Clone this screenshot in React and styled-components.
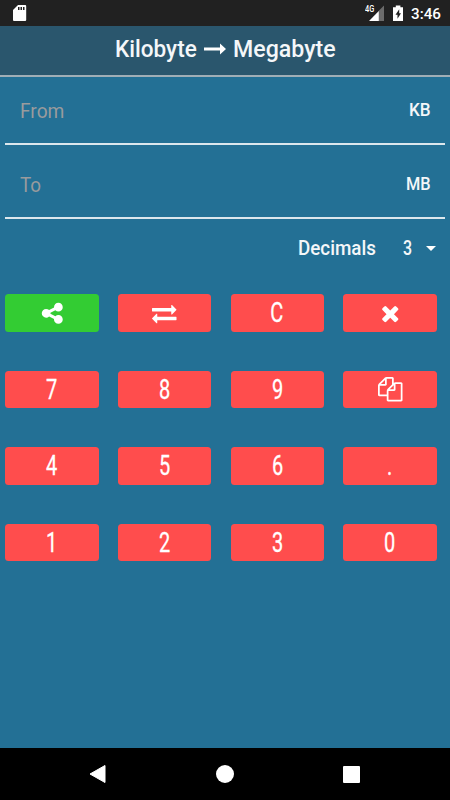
import React from "react";
import styled, { createGlobalStyle } from "styled-components";

const Global = createGlobalStyle`
  * { box-sizing: border-box; }
  body { margin: 0; background: #237095; }
  button { font: inherit; color: inherit; border: 0; padding: 0; margin: 0; }
`;

const Screen = styled.div`
  width: 450px;
  height: 800px;
  display: flex;
  flex-direction: column;
  overflow: hidden;
  background: #237095;
  color: #fff;
  font-family: Roboto, "Liberation Sans", sans-serif;
`;

const StatusBar = styled.div`
  height: 26px;
  flex: none;
  display: flex;
  align-items: center;
  justify-content: space-between;
  padding: 0 9px 0 13px;
  background: #212121;
`;

const StatusGroup = styled.div`
  display: flex;
  align-items: center;
`;

const Clock = styled.span`
  margin-left: 6px;
  padding-top: 2px;
  font-size: 15.2px;
  line-height: 18px;
  font-weight: 500;
`;

const Network = styled.span`
  display: block;
  width: 4px;
  margin-bottom: 8px;
  font-size: 9px;
  line-height: 10px;
  font-weight: 500;
  transform: scaleX(0.82);
  transform-origin: left center;
`;

const Header = styled.header`
  height: 51px;
  flex: none;
  display: flex;
  align-items: center;
  padding: 0 0 2px 115px;
  background: #2a566d;
  border-bottom: 2px solid #a0aeb6;
`;

const Label = styled.span`
  display: block;
  width: ${(p) => p.$width}px;
  font-size: ${(p) => p.$size}px;
  line-height: 1;
  font-weight: ${(p) => p.$weight || 500};
  color: ${(p) => p.$color || "#f4f7f9"};
  white-space: nowrap;
  transform: scaleX(${(p) => p.$stretch || 1});
  transform-origin: left center;
`;

const ArrowIcon = styled.svg`
  margin: 0 7px 2px;
  flex: none;
`;

const Field = styled.div`
  height: ${(p) => p.$height}px;
  flex: none;
  display: flex;
  justify-content: space-between;
  align-items: flex-start;
  margin: 0 5px;
  padding: ${(p) => p.$top}px 15px 0 15px;
  border-bottom: 2px solid #dce7ed;
`;

const DecimalsRow = styled.div`
  height: 75px;
  flex: none;
  display: flex;
  align-items: flex-start;
  justify-content: flex-end;
  padding: 19px 14px 0 0;
`;

const Caret = styled.svg`
  margin: 8px 0 0 15px;
`;

const Gap = styled.div`
  width: 27px;
`;

const Keypad = styled.main`
  flex: 1;
  display: grid;
  grid-template-columns: repeat(4, 93.4px);
  grid-auto-rows: 37.5px;
  column-gap: 19.2px;
  row-gap: 39.1px;
  padding-left: 5.4px;
`;

const Key = styled.button`
  display: flex;
  align-items: center;
  justify-content: center;
  border-radius: 3.5px;
  background: ${(p) => (p.$share ? "#33cc33" : "#ff4d4d")};
`;

const KeyText = styled.span`
  font-size: 27px;
  line-height: 36px;
  padding-top: 1px;
  font-weight: 400;
  transform: scaleX(0.74);
  -webkit-text-stroke: 0.3px #fff;
`;

const IconSvg = styled.svg`
  width: 24.5px;
  height: 24.5px;
  overflow: visible;
  fill: #fff;
`;

const NavBar = styled.nav`
  height: 52px;
  flex: none;
  display: flex;
  align-items: center;
  justify-content: space-around;
  padding: 0 36px 0 35px;
  background: #000;
`;

const icons = {
  share:
    "M1344 1024q133 0 226.500 93.500t93.500 226.500-93.500 226.500-226.500 93.500-226.500-93.500-93.500-226.500q0-12 2-34l-360-180q-92 86-218 86-133 0-226.500-93.500t-93.500-226.500 93.500-226.500 226.500-93.500q126 0 218 86l360-180q-2-22-2-34 0-133 93.500-226.500t226.500-93.500 226.500 93.500 93.500 226.500-93.500 226.500-226.500 93.500q-126 0-218-86l-360 180q2 22 2 34t-2 34l360 180q92-86 218-86z",
  swap:
    "M1792 1184v192q0 13-9.500 22.500t-22.500 9.500h-1376v192q0 13-9.500 22.500t-22.500 9.500q-12 0-24-10l-319-320q-9-9-9-22 0-14 9-23l320-320q9-9 23-9 13 0 22.500 9.500t9.500 22.500v192h1376q13 0 22.500 9.500t9.500 22.500zm0-544q0 14-9 23l-320 320q-9 9-23 9-13 0-22.500-9.500t-9.500-22.500v-192h-1376q-13 0-22.500-9.500t-9.500-22.500v-192q0-13 9.500-22.500t22.500-9.500h1376v-192q0-14 9-23t23-9q12 0 24 10l319 319q9 9 9 23z",
  close:
    "M1490 1322q0 40-28 68l-136 136q-28 28-68 28t-68-28l-294-294-294 294q-28 28-68 28t-68-28l-136-136q-28-28-28-68t28-68l294-294-294-294q-28-28-28-68t28-68l136-136q28-28 68-28t68 28l294 294 294-294q28-28 68-28t68 28l136 136q28 28 28 68t-28 68l-294 294 294 294q28 28 28 68z",
  copy:
    "M1696 384q40 0 68 28t28 68v1216q0 40-28 68t-68 28h-960q-40 0-68-28t-28-68v-288h-544q-40 0-68-28t-28-68v-672q0-40 20-88t48-76l408-408q28-28 76-48t88-20h416q40 0 68 28t28 68v328q68-40 128-40h416zm-544 213l-299 299h299v-299zm-640-384l-299 299h299v-299zm196 647l316-316v-416h-384v416q0 40-28 68t-68 28h-416v640h512v-256q0-40 20-88t48-76zm956 804v-1152h-384v416q0 40-28 68t-68 28h-416v640h896z",
};

const KeyIcon = ({ name }) => (
  <IconSvg viewBox="0 0 1792 1792">
    <path d={icons[name]} />
  </IconSvg>
);

const keys = [
  { icon: "share" }, { icon: "swap" }, { text: "C" }, { icon: "close" },
  { text: "7" }, { text: "8" }, { text: "9" }, { icon: "copy" },
  { text: "4" }, { text: "5" }, { text: "6" }, { text: "." },
  { text: "1" }, { text: "2" }, { text: "3" }, { text: "0" },
];

export default function App() {
  return (
    <Screen>
      <Global />
      <StatusBar>
        <svg width="14" height="18" viewBox="0 0 14 18">
          <path d="M5 1h7.200a1 1 0 0 1 1 1v14a1 1 0 0 1-1 1h-11.200a1 1 0 0 1-1-1V6z" fill="#fff" />
          <path d="M5 3h1.500v3H5zM7.500 3H9v3H7.500zM10 3h1.500v3H10z" fill="#212121" />
        </svg>
        <StatusGroup>
          <Network>4G</Network>
          <svg width="36" height="18" viewBox="0 0 36 18">
            <path d="M15 1.500V17H9.500V7z" fill="#6b6b6b" />
            <path d="M9.800 7V17H0z" fill="#fff" />
            <path d="M26.800 1.500h4.600v1.700h2.600v13.800H24V3.200h2.800z" fill="#fff" />
            <path d="M30.200 5.200l-3.700 5.600h2v4l3.500-5.600h-1.800z" fill="#212121" />
          </svg>
          <Clock>3:46</Clock>
        </StatusGroup>
      </StatusBar>
      <Header>
        <Label $width={82} $size={23.5} $stretch={0.96}>Kilobyte</Label>
        <ArrowIcon width="22" height="12" viewBox="0 0 22 12">
          <path d="M0 4.500h16V.5L22 6l-6 5.500V7.500H0z" fill="#fff" />
        </ArrowIcon>
        <Label $width={103} $size={23.5} $stretch={0.985}>Megabyte</Label>
      </Header>
      <Field $height={68} $top={24}>
        <Label $width={44} $size={20.5} $stretch={0.935} $weight={400} $color="#999b9d">From</Label>
        <Label $width={21} $size={18.8} $stretch={0.91}>KB</Label>
      </Field>
      <Field $height={74} $top={30}>
        <Label $width={22} $size={20.5} $stretch={0.92} $weight={400} $color="#999b9d">To</Label>
        <Label $width={24} $size={18.8} $stretch={0.87}>MB</Label>
      </Field>
      <DecimalsRow>
        <Label $width={78} $size={20} $stretch={0.94}>Decimals</Label>
        <Gap />
        <Label $width={8} $size={20} $stretch={0.8}>3</Label>
        <Caret width="10" height="5" viewBox="0 0 10 5">
          <path d="M0 0h10L5 5z" fill="#fff" />
        </Caret>
      </DecimalsRow>
      <Keypad>
        {keys.map((k) => (
          <Key key={k.icon || k.text} $share={k.icon === "share"}>
            {k.icon ? <KeyIcon name={k.icon} /> : <KeyText>{k.text}</KeyText>}
          </Key>
        ))}
      </Keypad>
      <NavBar>
        <svg width="18" height="20" viewBox="0 0 18 20">
          <path d="M16 1.500v17L1 10z" fill="#fff" stroke="#fff" strokeLinejoin="round" />
        </svg>
        <svg width="18" height="18" viewBox="0 0 18 18">
          <circle cx="9" cy="9" r="9" fill="#fff" />
        </svg>
        <svg width="17" height="17" viewBox="0 0 17 17">
          <rect width="17" height="17" rx="1" fill="#fff" />
        </svg>
      </NavBar>
    </Screen>
  );
}
